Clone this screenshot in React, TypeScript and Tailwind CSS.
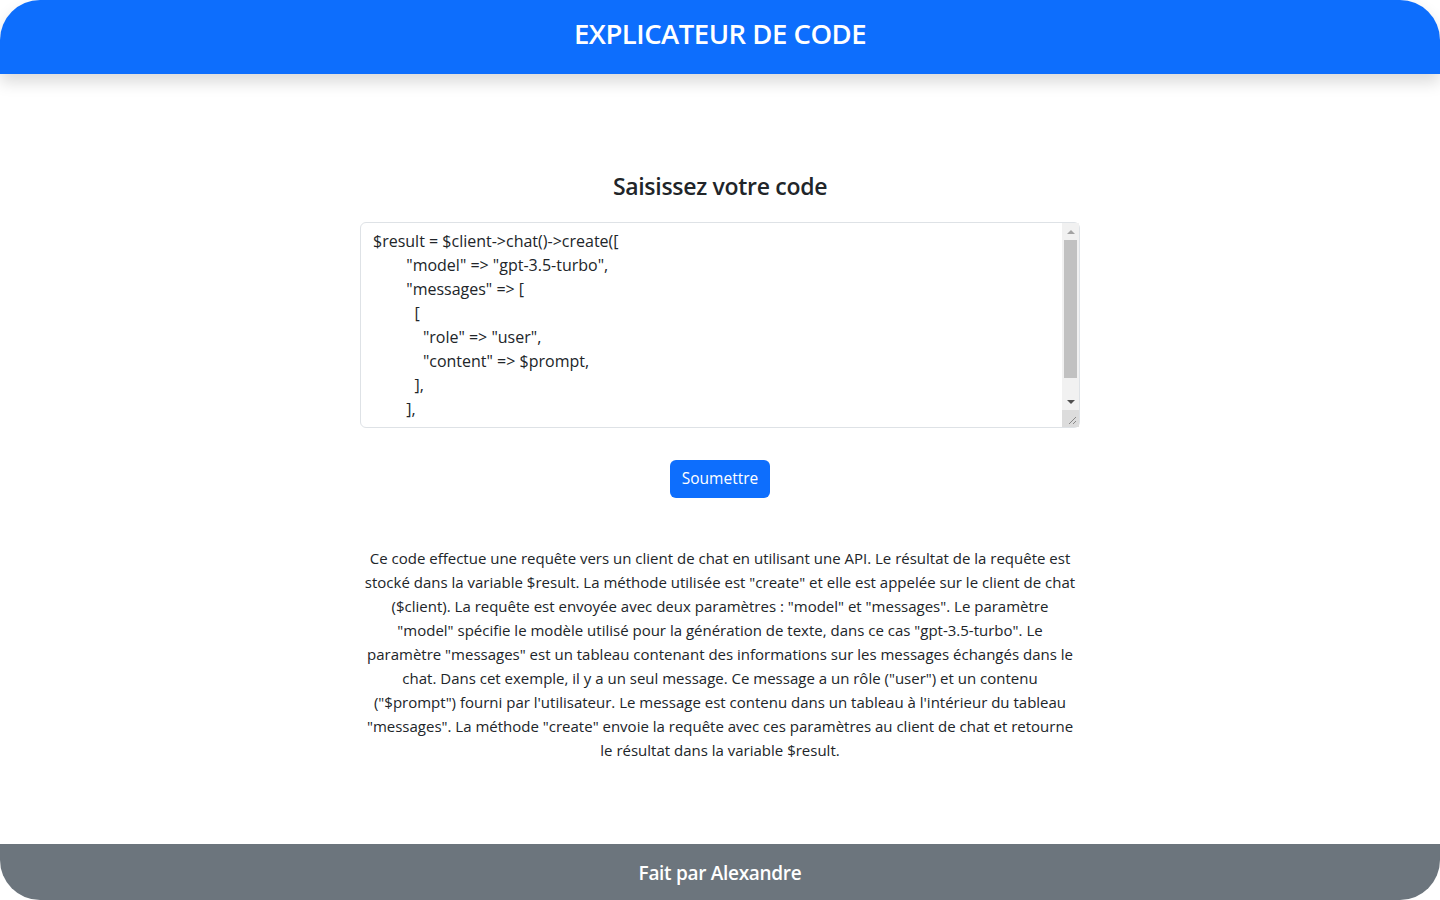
import React from 'react';

const code = `$result = $client->chat()->create([
\t"model" => "gpt-3.5-turbo",
\t"messages" => [
\t  [
\t    "role" => "user",
\t    "content" => $prompt,
\t  ],
\t],
]);
`;

// explicit lines so the wrap follows the reference
const explanation = [
  'Ce code effectue une requête vers un client de chat en utilisant une API. Le résultat de la requête est',
  'stocké dans la variable $result. La méthode utilisée est "create" et elle est appelée sur le client de chat',
  '($client). La requête est envoyée avec deux paramètres : "model" et "messages". Le paramètre',
  '"model" spécifie le modèle utilisé pour la génération de texte, dans ce cas "gpt-3.5-turbo". Le',
  'paramètre "messages" est un tableau contenant des informations sur les messages échangés dans le',
  'chat. Dans cet exemple, il y a un seul message. Ce message a un rôle ("user") et un contenu',
  '("$prompt") fourni par l\'utilisateur. Le message est contenu dans un tableau à l\'intérieur du tableau',
  '"messages". La méthode "create" envoie la requête avec ces paramètres au client de chat et retourne',
  'le résultat dans la variable $result.',
];

// headless browser hides native scrollbars, so the textarea one is drawn
const FakeScrollbar = () => (
  <div className="absolute right-[1px] top-[1px] bottom-[1px] w-[17px] bg-[#f1f1f1] flex flex-col items-center pointer-events-none">
    <div className="h-[17px] flex items-center justify-center">
      <div className="w-0 h-0 border-l-[4px] border-r-[4px] border-b-[4px] border-l-transparent border-r-transparent border-b-[#a3a3a3]" />
    </div>
    <div className="w-[13px] h-[138px] bg-[#c1c1c1]" />
    <div className="flex-1" />
    <div className="h-[17px] flex items-center justify-center">
      <div className="w-0 h-0 border-l-[4px] border-r-[4px] border-t-[4px] border-l-transparent border-r-transparent border-t-[#505050]" />
    </div>
    <div className="h-[17px] w-[17px] bg-[#dcdcdc] flex items-end justify-end p-[2px]">
      <svg width="9" height="9" viewBox="0 0 9 9">
        <path d="M8 1 L1 8 M8 5 L5 8" stroke="#888" strokeWidth="1" />
      </svg>
    </div>
  </div>
);

const App = () => {
  return (
    <div className="min-h-screen flex flex-col bg-white text-[#212529] font-['Open_Sans',sans-serif]">
      <header className="h-[74px] flex items-center justify-center bg-[#0d6efd] rounded-t-[40px] shadow-[0_8px_16px_rgba(0,0,0,0.15)] relative z-10">
        <h1 className="text-white text-[27.5px] font-semibold tracking-[-0.5px] leading-none -mt-[6px]">EXPLICATEUR DE CODE</h1>
      </header>

      <main className="flex-1 flex flex-col items-center pt-[98px]">
        <h2 className="text-[23px] font-semibold leading-[28px] mb-[22px] tracking-[-0.3px]">Saisissez votre code</h2>

        <div className="relative w-[720px] h-[206px]">
          <textarea
            className="w-full h-full border border-[#dee2e6] rounded-[6px] pl-3 pr-[30px] py-[6px] text-[16px] leading-6 text-[#212529] resize-none outline-none [tab-size:8]"
            defaultValue={code}
          />
          <FakeScrollbar />
        </div>

        <button className="mt-8 h-[38px] px-3 rounded-[6px] bg-[#0d6efd] text-white text-[15.5px]">
          Soumettre
        </button>

        <p className="mt-12 w-[720px] text-center text-[15px] leading-6">
          {explanation.map((line, i) => (
            <span key={i} className="block whitespace-nowrap">{line}</span>
          ))}
        </p>
      </main>

      <footer className="h-[56px] flex items-center justify-center bg-[#6c757d] rounded-b-[40px]">
        <span className="text-white text-[19px] font-semibold tracking-[-0.3px] mt-[2px]">Fait par Alexandre</span>
      </footer>
    </div>
  );
};

export default App;
